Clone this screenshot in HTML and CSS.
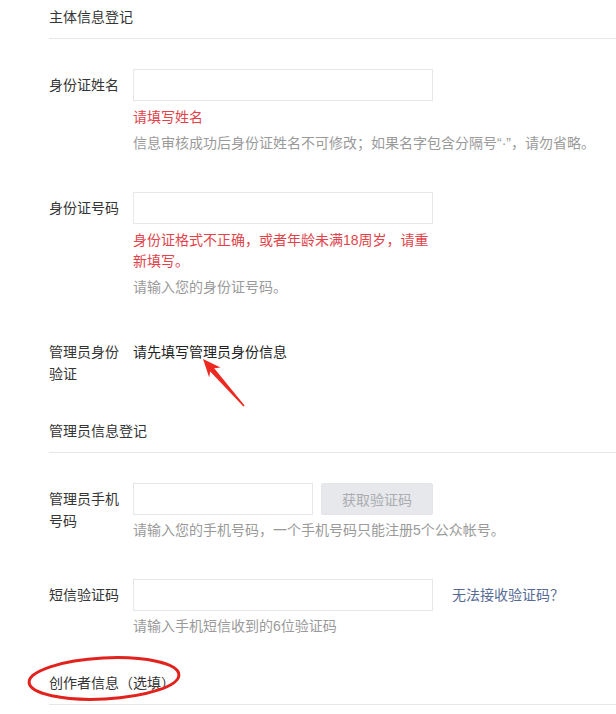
FILE: index.html
```html
<!DOCTYPE html>
<html lang="zh-CN">
<head>
<meta charset="utf-8">
<title>主体信息登记</title>
<link rel="stylesheet" href="styles.css">
</head>
<body>
<div class="page">
  <section class="section">
    <h3 class="section-title">主体信息登记</h3>
    <div class="row">
      <label class="label">身份证姓名</label>
      <div class="field">
        <input class="input" type="text">
        <p class="msg-error">请填写姓名</p>
        <p class="msg-tips">信息审核成功后身份证姓名不可修改；如果名字包含分隔号“·”，请勿省略。</p>
      </div>
    </div>
    <div class="row">
      <label class="label">身份证号码</label>
      <div class="field">
        <input class="input" type="text">
        <p class="msg-error msg-narrow">身份证格式不正确，或者年龄未满18周岁，请重新填写。</p>
        <p class="msg-tips">请输入您的身份证号码。</p>
      </div>
    </div>
    <div class="row row-last">
      <label class="label">管理员身份验证</label>
      <div class="field">
        <p class="field-text">请先填写管理员身份信息</p>
      </div>
    </div>
  </section>

  <section class="section">
    <h3 class="section-title">管理员信息登记</h3>
    <div class="row">
      <label class="label">管理员手机号码</label>
      <div class="field">
        <div class="input-group">
          <input class="input input-short" type="text">
          <button class="btn-disabled" type="button" disabled>获取验证码</button>
        </div>
        <p class="msg-tips msg-tips-tight">请输入您的手机号码，一个手机号码只能注册5个公众帐号。</p>
      </div>
    </div>
    <div class="row row-last">
      <label class="label">短信验证码</label>
      <div class="field">
        <div class="input-group input-group-link">
          <input class="input" type="text">
          <a class="link" href="#">无法接收验证码？</a>
        </div>
        <p class="msg-tips msg-tips-tight">请输入手机短信收到的6位验证码</p>
      </div>
    </div>
  </section>

  <section class="section">
    <h3 class="section-title">创作者信息（选填）</h3>
  </section>

  <svg class="annotations" width="616" height="714" viewBox="0 0 616 714" aria-hidden="true">
    <polygon class="arrow" points="203,359 220.5,367.5 214.2,368.3 244.6,405.4 243.4,406.6 210.2,371.4 209.2,377.6"/>
    <ellipse class="circle" cx="104" cy="678.5" rx="75" ry="20.5" transform="rotate(-3 104 678.5)"/>
  </svg>
</div>
</body>
</html>
```

FILE: styles.css
```css
html, body {
  margin: 0;
  padding: 0;
  background: #fff;
}

body {
  font-family: "Liberation Sans", "Noto Sans CJK SC", sans-serif;
  font-size: 14px;
  color: #353535;
}

.page {
  position: relative;
  width: 616px;
  height: 714px;
  overflow: hidden;
  padding: 6px 0 0 49px;
  box-sizing: border-box;
}

.section-title {
  margin: 0;
  padding-bottom: 10px;
  font-size: 14px;
  font-weight: normal;
  line-height: 22px;
  color: #353535;
  border-bottom: 1px solid #e7e7eb;
}

.section + .section .section-title {
  margin-top: 35px;
}

.row {
  display: flex;
  align-items: flex-start;
  margin-top: 38px;
}

.section-title + .row {
  margin-top: 30px;
}

.label {
  width: 74px;
  flex: none;
  margin-right: 10px;
  padding-top: 5px;
  line-height: 22px;
  color: #353535;
}

.field {
  flex: 1;
  min-width: 0;
}

.input {
  display: block;
  box-sizing: border-box;
  width: 300px;
  height: 32px;
  margin: 0;
  padding: 0 10px;
  border: 1px solid #e7e7eb;
  border-radius: 0;
  background: #fff;
  font: inherit;
  outline: none;
}

.input-short {
  width: 180px;
}

.input-group {
  display: flex;
  align-items: center;
  gap: 8px;
}

.input-group-link {
  gap: 19px;
}

.btn-disabled {
  box-sizing: border-box;
  width: 112px;
  height: 32px;
  margin: 0;
  padding: 0;
  border: 1px solid #e4e5e8;
  border-radius: 2px;
  background: #e7e8eb;
  color: #a9acb0;
  font: inherit;
}

.link {
  color: #576b95;
  text-decoration: none;
  line-height: 22px;
}

.msg-error {
  margin: 6px 0 0;
  line-height: 21px;
  color: #e2434b;
}

.msg-narrow {
  width: 300px;
}

.msg-tips {
  margin: 5px 0 0;
  line-height: 21px;
  color: #9a9a9a;
  white-space: nowrap;
}

.field-text {
  margin: 0;
  padding-top: 5px;
  line-height: 22px;
  color: #222;
}

.annotations {
  position: absolute;
  top: 0;
  left: 0;
  pointer-events: none;
}

.arrow {
  fill: #ec2a22;
}

.circle {
  fill: none;
  stroke: #e2231d;
  stroke-width: 3;
}
```
